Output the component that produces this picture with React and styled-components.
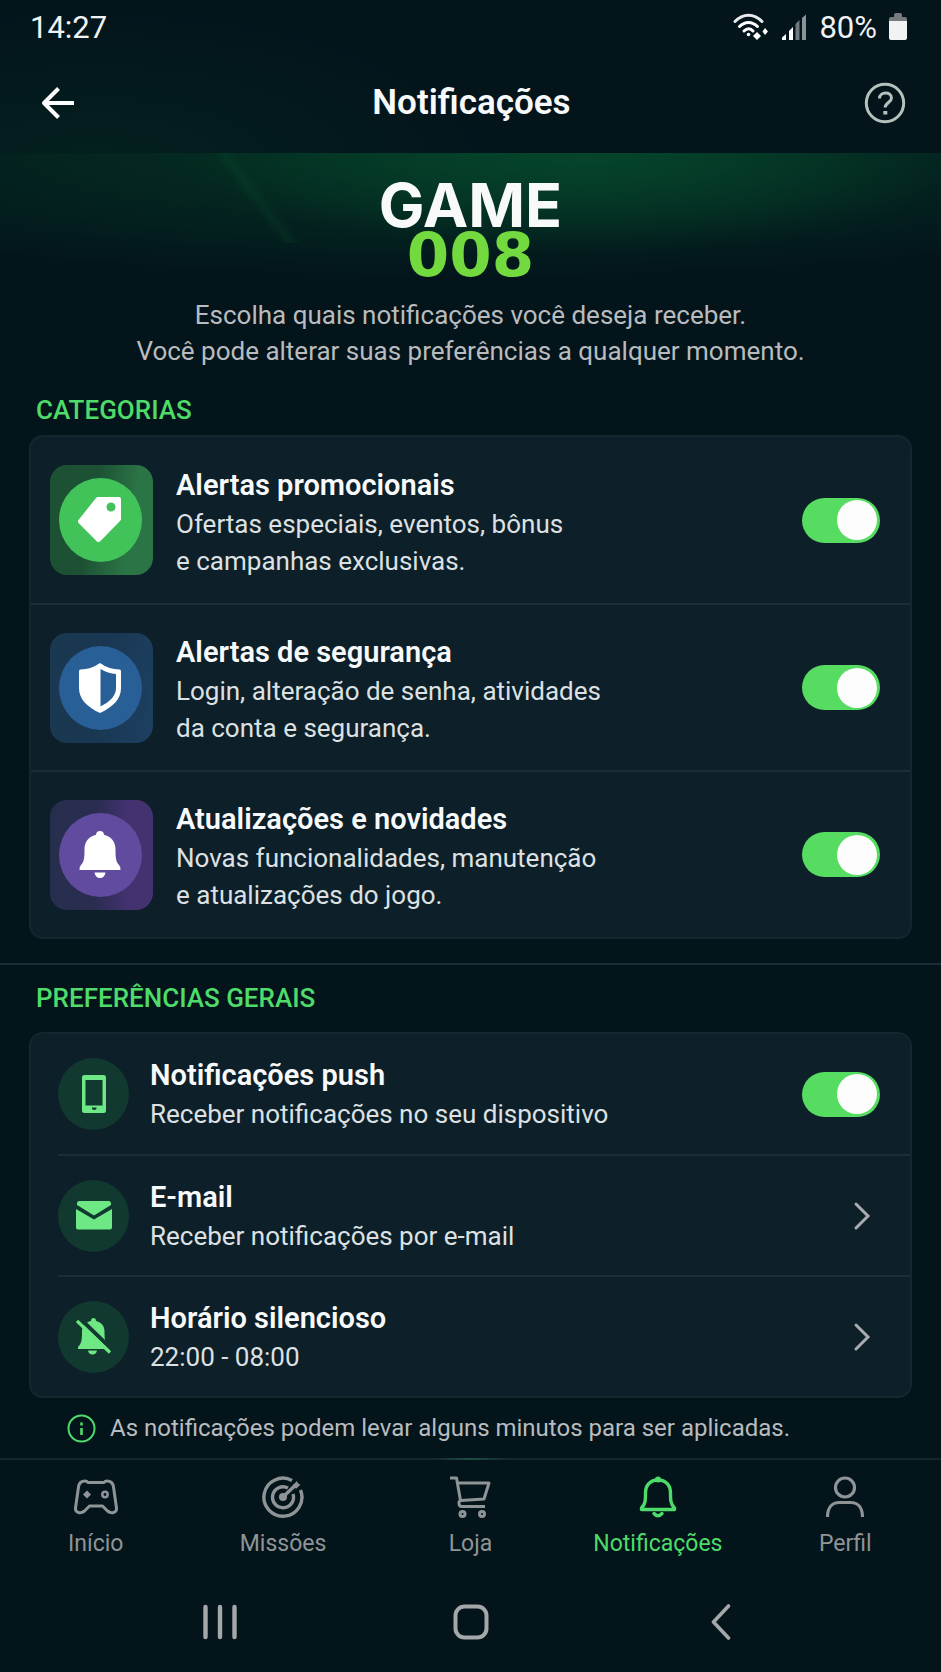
import { useState } from "react";
import styled, { createGlobalStyle } from "styled-components";

const GlobalStyle = createGlobalStyle`
  :root {
    --bg: #03141b;
    --card-bg: #0d1f28;
    --line: #1c2d35;
    --green: #4fdb69;
    --title: #f7f9fa;
    --text: #dde1e3;
    --muted: #b9bcbe;
    --nav: #8f9496;
  }

  * {
    box-sizing: border-box;
  }

  body {
    margin: 0;
    background: var(--bg);
    font-family: Roboto, "Noto Sans", sans-serif;
    color: var(--text);
  }

  button {
    padding: 0;
    border: 0;
    background: none;
    color: inherit;
    font: inherit;
    cursor: pointer;
  }

  svg {
    display: block;
  }
`;

const Page = styled.div`
  display: flex;
  flex-direction: column;
  min-height: 100vh;
`;

const TopArea = styled.div`
  background: radial-gradient(ellipse 45% 110% at 10% 110%, #04201f, transparent);
`;

const StatusBar = styled.div`
  display: flex;
  align-items: center;
  justify-content: space-between;
  height: 52px;
  padding: 2px 34px 0 30px;
  color: #f0f2f3;
  font-size: 31px;
`;

const StatusIcons = styled.div`
  display: flex;
  align-items: center;
  gap: 12px;
`;

const Header = styled.header`
  display: grid;
  grid-template-columns: 48px 1fr 48px;
  align-items: center;
  height: 101px;
  padding: 0 32px 0 34px;
`;

const HeaderTitle = styled.h1`
  margin: 0;
  color: var(--title);
  font-size: 35px;
  font-weight: 600;
  text-align: center;
`;

const HeaderButton = styled.button`
  display: flex;
  align-items: center;
  justify-content: center;
  height: 48px;
`;

const Hero = styled.section`
  display: flex;
  flex-direction: column;
  align-items: center;
  padding: 28px 24px 0;
  background:
    linear-gradient(53deg, transparent 44%, #0a5a3030 50%, transparent 56%) 24% 0 / 120px 90px no-repeat,
    radial-gradient(ellipse 42% 46% at 62% 0, #05452b, transparent),
    radial-gradient(ellipse 90% 60% at 50% 0, #043424, transparent);
`;

const Logo = styled.div`
  display: flex;
  flex-direction: column;
  align-items: center;
  gap: 2px;
  color: #f8f9f9;
  font-family: Inter, "DejaVu Sans", sans-serif;
  font-size: 61px;
  font-weight: 700;
  line-height: 48px;
`;

const LogoNumber = styled.span`
  color: #72d93f;
  font-family: "DejaVu Sans", sans-serif;
`;

const Intro = styled.p`
  margin: 18px 0 0;
  color: var(--muted);
  font-size: 26px;
  line-height: 36px;
  text-align: center;
`;

const Section = styled.section`
  padding: 0 29px;
  border-top: ${({ $divided }) => ($divided ? "2px solid var(--line)" : "0")};
  margin-top: 24px;
  padding-top: ${({ $divided }) => ($divided ? "16px" : "0")};
`;

const SectionTitle = styled.h2`
  margin: 0 0 ${({ $gap }) => $gap}px;
  padding-left: 7px;
  color: var(--green);
  font-size: 26px;
  font-weight: 500;
  line-height: 34px;
  text-transform: uppercase;
`;

const Card = styled.div`
  border: 2px solid #14262e;
  border-radius: 14px;
  background: var(--card-bg);
`;

const CategoryRow = styled.label`
  display: flex;
  align-items: center;
  gap: 23px;
  height: 166px;
  padding: 0 30px 0 19px;
  cursor: pointer;

  & + & {
    height: 167px;
    border-top: 2px solid var(--line);
  }
`;

const PreferenceRow = styled.div`
  height: 120px;
  margin-left: 27px;
  padding-right: 30px;

  & + & {
    height: 121px;
    border-top: 2px solid var(--line);
  }
`;

const RowButton = styled.button`
  display: flex;
  align-items: center;
  gap: 21px;
  width: 100%;
  height: 100%;
  padding-right: 9px;
  text-align: left;
`;

const RowLabel = styled.label`
  display: flex;
  align-items: center;
  gap: 21px;
  height: 100%;
  cursor: pointer;
`;

const Tile = styled.span`
  display: flex;
  flex: none;
  align-items: center;
  justify-content: center;
  width: 103px;
  height: 110px;
  padding-right: 3px;
  border-radius: 17px;
  background: ${({ $background }) => $background};
`;

const TileDisc = styled.span`
  display: flex;
  align-items: center;
  justify-content: center;
  width: 83px;
  height: 84px;
  border-radius: 50%;
  background: ${({ $color }) => $color};
`;

const Disc = styled.span`
  display: flex;
  flex: none;
  align-items: center;
  justify-content: center;
  width: 71px;
  height: 72px;
  border-radius: 50%;
  background: #123930;
`;

const RowText = styled.span`
  display: block;
  flex: 1;
  padding-top: ${({ $tall }) => ($tall ? "4px" : "0")};
`;

const RowTitle = styled.span`
  display: block;
  color: var(--title);
  font-size: 29px;
  font-weight: 600;
  line-height: 41px;
`;

const RowDescription = styled.span`
  display: block;
  font-size: 26px;
  line-height: 37px;
`;

const Switch = styled.input`
  appearance: none;
  display: flex;
  flex: none;
  align-items: center;
  justify-content: flex-start;
  width: 78px;
  height: 45px;
  margin: 0;
  padding: 0 3px;
  border-radius: 23px;
  background: #33454d;
  cursor: pointer;

  &::before {
    content: "";
    width: 40px;
    height: 40px;
    border-radius: 50%;
    background: #fdfdfd;
  }

  &:checked {
    justify-content: flex-end;
    background: #56dc60;
  }
`;

const Note = styled.p`
  display: flex;
  align-items: center;
  gap: 14px;
  margin: 0;
  padding: 12px 67px;
  color: var(--muted);
  font-size: 24px;
  line-height: 36px;
`;

const TabBar = styled.nav`
  display: grid;
  grid-template-columns: repeat(5, 1fr);
  border-top: 2px solid transparent;
  border-image: linear-gradient(90deg, #15262d 46%, #1c5040 50%, #15262d 54%) 1;
  padding: 16px 2px 0;
`;

const Tab = styled.a`
  display: flex;
  flex-direction: column;
  align-items: center;
  gap: 9px;
  color: ${({ $active }) => ($active ? "var(--green)" : "var(--nav)")};
  font-size: 23px;
  line-height: 34px;
  text-decoration: none;
`;

const SystemBar = styled.div`
  display: grid;
  grid-template-columns: repeat(3, 1fr);
  margin-top: 39px;
  padding: 0 10%;
  color: #a5a8a9;
`;

const SystemButton = styled.button`
  display: flex;
  align-items: center;
  justify-content: center;
  height: 44px;
`;

const WifiIcon = () => (
  <svg width="36" height="28" viewBox="0 0 36 28" fill="none" stroke="#e8eaeb" strokeWidth="3" strokeLinecap="round">
    <path d="M2 8.500C10 0 21 0 29 8.500" />
    <path d="M6.500 13.500C12 8 19 8 24.500 13.500" stroke="#fff" />
    <path d="M11 18C14 15 17.500 15 20 18" stroke="#fff" />
    <circle cx="15.500" cy="21.500" r="1.800" fill="#fff" stroke="none" />
    <path d="M24 19l4 4-4 4-4-4zM32 15l3 3.500-3 3.500-2.500-3.500z" fill="#fff" stroke="none" />
  </svg>
);

const SignalIcon = () => (
  <svg width="26" height="27" viewBox="0 0 26 27">
    <path d="M1 26v-2.500L5 20v6z" fill="#fff" />
    <path d="M8 26V17l4-4v13z" fill="#fff" />
    <path d="M14.500 26V10l4-4v20z" fill="#707a7f" />
    <path d="M21 26V4l4-3.500V26z" fill="#8b9397" />
  </svg>
);

const BatteryIcon = () => (
  <svg width="18" height="28" viewBox="0 0 18 28">
    <path d="M0 8V6q0-2 2-2h3V2q0-2 2-2h4q2 0 2 2v2h3q2 0 2 2v2z" fill="#737b7e" />
    <path d="M0 8h18v17q0 2-2 2H2q-2 0-2-2z" fill="#f1f2f2" />
  </svg>
);

const BackIcon = () => (
  <svg width="34" height="34" viewBox="0 0 34 34" fill="none" stroke="#fff" strokeWidth="4">
    <path d="M17.500 2.500L3 17l14.500 14.500M4 17h29" strokeLinejoin="round" />
  </svg>
);

const HelpIcon = () => (
  <svg width="42" height="42" viewBox="0 0 42 42" fill="none" stroke="#b5c1bc" strokeWidth="3">
    <circle cx="21" cy="21" r="18.700" />
    <path d="M15.500 16.500c0-7 12-7.500 12-.5 0 4.500-6.300 4.500-6.300 9.500" />
    <path d="M19.300 29h4v3.500h-4z" fill="#b5c1bc" stroke="none" />
  </svg>
);

const TagIcon = () => (
  <svg width="46" height="48" viewBox="57 68 46 48">
    <path
      d="M78 69h21q2 0 2 2v20q0 1-1 2L80 113.500q-1.500 1-3 0L58.500 95q-1-1.500 0-3L76 70q1-1 2-1zM91 74.500a4.500 4.500 0 1 0 0 9 4.500 4.500 0 0 0 0-9z"
      fill="#fff"
      fillRule="evenodd"
    />
  </svg>
);

const ShieldIcon = () => (
  <svg width="44" height="50" viewBox="0 0 44 50">
    <path
      d="M22 0q9 6.500 19.500 6.500 1.500 0 1.500 1.500v17c0 11-8 19-21 25C9 44 1 36 1 25V8q0-1.500 1.500-1.500Q13 6.500 22 0zM22.500 6v37.500C32 38.500 38 33 38 25V11Q30 10.500 22.500 6z"
      fill="#fff"
      fillRule="evenodd"
    />
  </svg>
);

const BellIcon = () => (
  <svg width="42" height="48" viewBox="0 0 42 48" fill="#fff">
    <path d="M21 0c2.500 0 4 1.500 4 3.800 7.500 2 11.500 7.500 11.500 14.200 0 9 .5 13 3.500 16q2 2 1.500 5h-41q-.5-3 1.500-5c3-3 3.500-7 3.500-16C5.500 11.300 9.500 5.800 17 3.800 17 1.500 18.500 0 21 0zM15.500 41.500h11C26 45 24 47 21 47s-5-2-5.500-5.500z" />
  </svg>
);

const PhoneIcon = () => (
  <svg width="24" height="39" viewBox="0 0 24 39">
    <path
      d="M2.500 0h19Q24 0 24 2.500v33q0 2.500-2.500 2.500h-19Q0 38 0 35.500v-33Q0 0 2.500 0zM3.500 5v25.500h17V5zM10 32.500h4.500v1.500q-2.200 2-4.500 0z"
      fill="#6ee785"
      fillRule="evenodd"
    />
  </svg>
);

const MailIcon = () => (
  <svg width="36" height="29" viewBox="0 0 36 29" fill="#6ee785">
    <path d="M1 2.500Q1 0 3 0h30q2 0 2 2.500V4L18 14.500 1 4z" />
    <path d="M0 8l18 10.500L36 8v18.500q0 2-2 2H2q-2 0-2-2z" />
  </svg>
);

const BellOffIcon = () => (
  <svg width="36" height="37" viewBox="0 0 36 37">
    <path
      d="M17.500 0c1.500 0 2.500 1 2.500 3 5.500 1.300 8.500 5 8.500 10.500 0 7 .5 12 3.500 15.500v2H2v-2c3.500-3.500 4-7 4-15.500C6 8 9.500 4.300 15 3c0-2 1-3 2.500-3zM12 32.500h9c-.5 2.500-2 4-4.500 4s-4-1.500-4.500-4z"
      fill="#6ee785"
    />
    <path d="M4 .5L37 32.500" stroke="#123930" strokeWidth="4" />
    <path d="M1 3L34 34.500" stroke="#6ee785" strokeWidth="3.200" />
  </svg>
);

const ChevronIcon = () => (
  <svg width="18" height="30" viewBox="0 0 18 30" fill="none" stroke="#a9acae" strokeWidth="3" strokeLinecap="round">
    <path d="M3 3l12 12L3 27" />
  </svg>
);

const InfoIcon = () => (
  <svg width="29" height="29" viewBox="0 0 29 29" fill="none" stroke="#4fdb69" strokeWidth="2">
    <circle cx="14.500" cy="14.500" r="13" />
    <path d="M14.500 8.500v3M14.500 14v7" strokeWidth="2.600" />
  </svg>
);

const GamepadIcon = () => (
  <svg width="46" height="42" viewBox="0 0 46 42" fill="none" stroke="currentColor" strokeWidth="3" strokeLinejoin="round">
    <path d="M12 5q2 0 3 1.500h16Q32 5 34 5c4 0 6 2 6.500 6l3 21c.5 5-5.500 6-9 3l-5-5h-13l-5 5c-3.500 3-9.500 2-9-3l3-21C6 7 8 5 12 5z" />
    <path d="M14 14.500l4 4-4 4-4-4z" fill="currentColor" stroke="none" />
    <circle cx="32" cy="18.500" r="2.700" strokeWidth="2.500" />
  </svg>
);

const TargetIcon = () => (
  <svg width="42" height="42" viewBox="0 0 42 42" fill="none" stroke="currentColor" strokeWidth="3.400">
    <path d="M30 4.500A19 19 0 1 0 38.500 14" />
    <path d="M26 12A10.500 10.500 0 1 0 31 18" />
    <circle cx="21" cy="21" r="4" fill="currentColor" stroke="none" />
    <path d="M21 21L33 9.500" />
    <path d="M31 9l4-4 1 2.500 2.500 1-4 4-3-.5z" fill="currentColor" stroke="none" />
  </svg>
);

const CartIcon = () => (
  <svg width="42" height="42" viewBox="0 0 42 42" fill="none" stroke="currentColor" strokeWidth="3" strokeLinejoin="round">
    <path d="M1 2h6.500l4 22.500M9 7h31l-5 16-23 1.500c-3 .5-2.500 6 .5 6H36" />
    <circle cx="13.500" cy="38" r="2.500" />
    <circle cx="33" cy="38" r="2.500" />
  </svg>
);

const BellOutlineIcon = () => (
  <svg width="38" height="42" viewBox="0 0 38 42" fill="none" stroke="currentColor" strokeWidth="3.400" strokeLinejoin="round">
    <path d="M19 4C11 4 6.500 9.500 6.500 17c0 7 0 11-4 15v1.500h33V32c-4-4-4-8-4-15C31.500 9.500 27 4 19 4z" />
    <circle cx="19" cy="3.500" r="3" fill="currentColor" stroke="none" />
    <path d="M15 37.500q4 4.500 8 0" strokeLinecap="round" />
  </svg>
);

const UserIcon = () => (
  <svg width="42" height="42" viewBox="0 0 42 42" fill="none" stroke="currentColor" strokeWidth="3.200">
    <circle cx="21" cy="11.500" r="9.500" />
    <path d="M3.500 41c0-10 5-14.500 12-14.500h11c7 0 12 4.500 12 14.500" />
  </svg>
);

const RecentsIcon = () => (
  <svg width="36" height="36" viewBox="0 0 36 36" stroke="currentColor" strokeWidth="4.400" strokeLinecap="round">
    <path d="M3.500 3v30M18 3v30M32.500 3v30" />
  </svg>
);

const HomeIcon = () => (
  <svg width="36" height="36" viewBox="0 0 36 36" fill="none" stroke="currentColor" strokeWidth="4">
    <rect x="2.500" y="2.500" width="31" height="31" rx="9" />
  </svg>
);

const SystemBackIcon = () => (
  <svg width="20" height="36" viewBox="0 0 20 36" fill="none" stroke="currentColor" strokeWidth="3.600" strokeLinecap="round">
    <path d="M17.500 2L2.500 18l15 16" strokeLinejoin="round" />
  </svg>
);

const categories = [
  {
    id: "promo",
    title: "Alertas promocionais",
    lines: ["Ofertas especiais, eventos, bônus", "e campanhas exclusivas."],
    icon: <TagIcon />,
    color: "#41c359",
    background: "linear-gradient(100deg, #1c5134, #1c5134 40%, #2b7445 75%)",
  },
  {
    id: "security",
    title: "Alertas de segurança",
    lines: ["Login, alteração de senha, atividades", "da conta e segurança."],
    icon: <ShieldIcon />,
    color: "#295f97",
    background: "linear-gradient(100deg, #1a3850, #193752 50%, #1d4062)",
  },
  {
    id: "updates",
    title: "Atualizações e novidades",
    lines: ["Novas funcionalidades, manutenção", "e atualizações do jogo."],
    icon: <BellIcon />,
    color: "#614b9f",
    background: "linear-gradient(90deg, #262e4d, #2a2d51 45%, #443270 75%)",
  },
];

const links = [
  { title: "E-mail", description: "Receber notificações por e-mail", icon: <MailIcon /> },
  { title: "Horário silencioso", description: "22:00 - 08:00", icon: <BellOffIcon /> },
];

const tabs = [
  { label: "Início", href: "#inicio", icon: <GamepadIcon /> },
  { label: "Missões", href: "#missoes", icon: <TargetIcon /> },
  { label: "Loja", href: "#loja", icon: <CartIcon /> },
  { label: "Notificações", href: "#notificacoes", icon: <BellOutlineIcon />, active: true },
  { label: "Perfil", href: "#perfil", icon: <UserIcon /> },
];

const App = () => {
  const [enabled, setEnabled] = useState({
    promo: true,
    security: true,
    updates: true,
    push: true,
  });

  const toggle = (id) => setEnabled((prev) => ({ ...prev, [id]: !prev[id] }));

  return (
    <Page>
      <GlobalStyle />
      <TopArea>
        <StatusBar>
          <span>14:27</span>
          <StatusIcons>
            <WifiIcon />
            <SignalIcon />
            <span>80%</span>
            <BatteryIcon />
          </StatusIcons>
        </StatusBar>
        <Header>
          <HeaderButton type="button" aria-label="Voltar">
            <BackIcon />
          </HeaderButton>
          <HeaderTitle>Notificações</HeaderTitle>
          <HeaderButton type="button" aria-label="Ajuda">
            <HelpIcon />
          </HeaderButton>
        </Header>
      </TopArea>

      <main>
        <Hero>
          <Logo>
            <span>GAME</span>
            <LogoNumber>008</LogoNumber>
          </Logo>
          <Intro>
            Escolha quais notificações você deseja receber.
            <br />
            Você pode alterar suas preferências a qualquer momento.
          </Intro>
        </Hero>

        <Section>
          <SectionTitle $gap={8}>Categorias</SectionTitle>
          <Card>
            {categories.map(({ id, title, lines, icon, color, background }) => (
              <CategoryRow key={id}>
                <Tile $background={background}>
                  <TileDisc $color={color}>{icon}</TileDisc>
                </Tile>
                <RowText $tall>
                  <RowTitle>{title}</RowTitle>
                  {lines.map((line) => (
                    <RowDescription key={line}>{line}</RowDescription>
                  ))}
                </RowText>
                <Switch
                  type="checkbox"
                  role="switch"
                  checked={enabled[id]}
                  onChange={() => toggle(id)}
                />
              </CategoryRow>
            ))}
          </Card>
        </Section>

        <Section $divided>
          <SectionTitle $gap={17}>Preferências gerais</SectionTitle>
          <Card>
            <PreferenceRow>
              <RowLabel>
                <Disc>
                  <PhoneIcon />
                </Disc>
                <RowText>
                  <RowTitle>Notificações push</RowTitle>
                  <RowDescription>Receber notificações no seu dispositivo</RowDescription>
                </RowText>
                <Switch
                  type="checkbox"
                  role="switch"
                  checked={enabled.push}
                  onChange={() => toggle("push")}
                />
              </RowLabel>
            </PreferenceRow>
            {links.map(({ title, description, icon }) => (
              <PreferenceRow key={title}>
                <RowButton type="button">
                  <Disc>{icon}</Disc>
                  <RowText>
                    <RowTitle>{title}</RowTitle>
                    <RowDescription>{description}</RowDescription>
                  </RowText>
                  <ChevronIcon />
                </RowButton>
              </PreferenceRow>
            ))}
          </Card>
        </Section>

        <Note>
          <InfoIcon />
          As notificações podem levar alguns minutos para ser aplicadas.
        </Note>
      </main>

      <TabBar>
        {tabs.map(({ label, href, icon, active }) => (
          <Tab key={label} href={href} $active={active} aria-current={active ? "page" : undefined}>
            {icon}
            {label}
          </Tab>
        ))}
      </TabBar>

      <SystemBar>
        <SystemButton type="button" aria-label="Recentes">
          <RecentsIcon />
        </SystemButton>
        <SystemButton type="button" aria-label="Tela inicial">
          <HomeIcon />
        </SystemButton>
        <SystemButton type="button" aria-label="Voltar ao anterior">
          <SystemBackIcon />
        </SystemButton>
      </SystemBar>
    </Page>
  );
};

export default App;
